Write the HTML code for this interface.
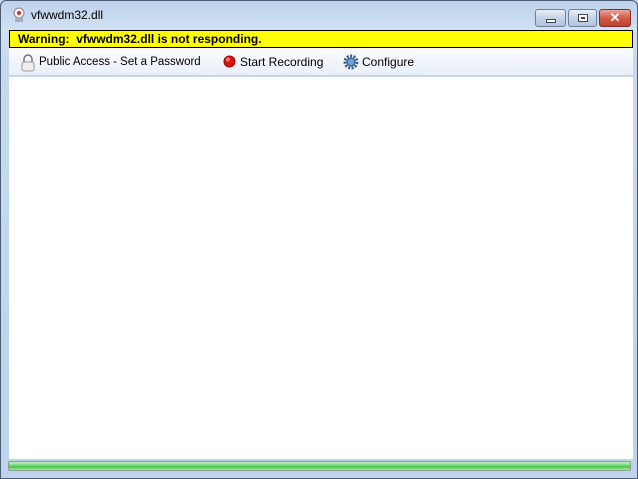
<!DOCTYPE html>
<html><head><style>
*{margin:0;padding:0;box-sizing:border-box}
body{width:638px;height:479px;overflow:hidden;background:#c9dbf0;font-family:"Liberation Sans",sans-serif;position:relative}
#frame{position:absolute;left:0;top:0;width:638px;height:479px;background:linear-gradient(#bcd1ea,#d3e2f4 30px,#c6d9ef 60px,#bed3ec);border:1px solid #4a5d75;border-radius:6px 6px 0 0}
#title{position:absolute;left:31px;top:8px;font-size:12px;color:#000}
#yellow{position:absolute;left:9px;top:30px;width:624px;height:18px;background:#ffff00;border:1px solid #000;font-weight:bold;font-size:12px;padding:1px 0 0 8px}
#tool{position:absolute;left:9px;top:48px;width:624px;height:28px;background:linear-gradient(#fbfcfe,#e9f0f9);border-bottom:1px solid #c5d2e2;font-size:12px}
#tool span{position:absolute;top:7px}
#content{position:absolute;left:9px;top:77px;width:624px;height:382px;background:#fff}
#prog{position:absolute;left:8px;top:461px;width:623px;height:10px;border:1px solid #8aa08a;border-radius:2px;background:linear-gradient(#c9f2c9,#5fd55f 50%,#46c446 60%,#a8e8a8)}
.btn{position:absolute;top:9px;height:18px;border:1px solid #6d7f99;border-radius:3px;background:linear-gradient(#e8eef7,#c4d3e6 50%,#b2c5de)}
</style></head><body>
<div id="frame"></div>
<svg style="position:absolute;left:11px;top:7px" width="16" height="16"><circle cx="8" cy="6" r="5" fill="#f4f4f4" stroke="#888"/><circle cx="8" cy="6" r="2" fill="#c33"/><rect x="4" y="11" width="8" height="4" fill="#aab"/></svg>
<div id="title">vfwwdm32.dll</div>
<div class="btn" style="left:535px;width:31px"><div style="position:absolute;left:10px;top:9px;width:10px;height:4px;background:#fff;border:1px solid #445"></div></div>
<div class="btn" style="left:568px;width:29px"><div style="position:absolute;left:9px;top:4px;width:10px;height:8px;border:1px solid #445;background:#fff;box-shadow:inset 0 0 0 2px #fff,inset 0 0 0 3px #445"></div></div>
<div class="btn" style="left:599px;width:32px;border-color:#7a3030;background:linear-gradient(#e8a89a,#d25a45 50%,#c0402a)"><div style="position:absolute;left:0;top:0;width:30px;text-align:center;color:#fff;font-weight:bold;font-size:13px;line-height:16px">✕</div></div>
<div id="yellow">Warning:&nbsp; vfwwdm32.dll is not responding.</div>
<div id="tool">
<svg style="position:absolute;left:11px;top:4px" width="16" height="20"><path d="M4 18V7a4 4 0 0 1 8 0v11" fill="none" stroke="#777" stroke-width="1.5"/><rect x="2" y="10" width="12" height="9" rx="2" fill="#eee" stroke="#999"/></svg>
<span style="left:30px;font-size:11.5px;top:8px">Public Access - Set a Password</span>
<svg style="position:absolute;left:214px;top:7px" width="13" height="13"><circle cx="6.5" cy="6.5" r="5.5" fill="#e01010" stroke="#900"/><circle cx="5" cy="4.5" r="2" fill="#f77"/></svg>
<span style="left:231px">Start Recording</span>
<svg style="position:absolute;left:334px;top:6px" width="16" height="16"><circle cx="8" cy="8" r="6" fill="none" stroke="#3a5a8a" stroke-width="3" stroke-dasharray="2 1.4"/><circle cx="8" cy="8" r="4" fill="#6aa0e0" stroke="#2a4a7a"/></svg>
<span style="left:353px">Configure</span>
</div>
<div id="content"></div>
<div id="prog"></div>
</body></html>
